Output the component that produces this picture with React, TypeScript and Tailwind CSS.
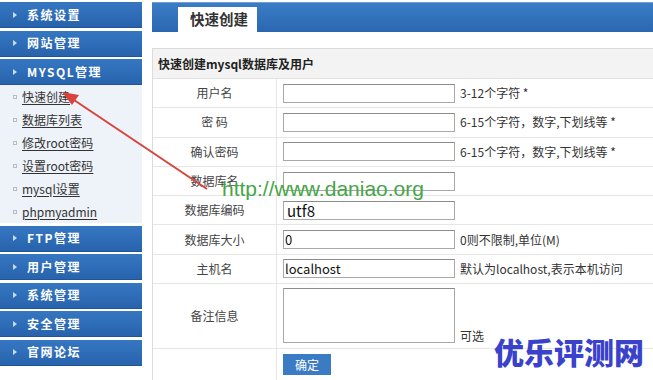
import React from "react";

const topMenus = ["系统设置", "网站管理", "MYSQL管理"];
const bottomMenus = ["FTP管理", "用户管理", "系统管理", "安全管理", "官网论坛"];
const subItems = ["快速创建", "数据库列表", "修改root密码", "设置root密码", "mysql设置", "phpmyadmin"];

function Bar({ label }: { label: string }) {
  return (
    <div className="h-[26px] bg-gradient-to-b from-[#3677c2] to-[#2863ad] flex items-center pl-[13px] border-b border-[#1f5596]">
      <span className="w-0 h-0 border-l-[4px] border-l-[#c4dbf2] border-y-[3.5px] border-y-transparent mr-[10px]" />
      <span className="text-white font-bold text-[12px] tracking-[1.5px] leading-none">{label}</span>
    </div>
  );
}

type Row = { label: string; value?: string; hint?: string; big?: boolean };

const rows: Row[] = [
  { label: "用户名", hint: "3-12个字符 *" },
  { label: "密 码", hint: "6-15个字符，数字,下划线等 *" },
  { label: "确认密码", hint: "6-15个字符，数字,下划线等 *" },
  { label: "数据库名" },
  { label: "数据库编码", value: "utf8", big: true },
  { label: "数据库大小", value: "0", hint: "0则不限制,单位(M)" },
  { label: "主机名", value: "localhost", hint: "默认为localhost,表示本机访问" },
];

export default function App() {
  return (
    <div className="relative w-[653px] h-[380px] overflow-hidden bg-white flex font-['Noto_Sans_CJK_SC','Noto_Sans',sans-serif] text-[#333]">
      {/* Sidebar */}
      <aside className="w-[142px] shrink-0 pt-[2px] flex flex-col gap-[2.5px]">
        {topMenus.map((m) => (
          <Bar key={m} label={m} />
        ))}
        <div className="bg-[#eef2f9] -mt-[2.5px] flex flex-col">
          {subItems.map((s) => (
            <div key={s} className="h-[23px] flex items-center pl-[13px]">
              <span className="w-[4px] h-[4px] border border-[#b5bcc8] mr-[5px]" />
              <span className="text-[12px] leading-none underline underline-offset-2 text-[#333]">{s}</span>
            </div>
          ))}
        </div>
        {bottomMenus.map((m) => (
          <Bar key={m} label={m} />
        ))}
      </aside>

      {/* Main */}
      <main className="ml-[10px] flex-1 flex flex-col">
        <div className="mt-[2px] h-[30px] bg-gradient-to-b from-[#3a7cc6] to-[#2b67b0] border-t border-[#6f9fd6] flex items-end pl-[26px]">
          <div className="w-[79px] h-[25px] bg-white flex items-center pl-[12px]">
            <span className="text-[14.5px] font-bold leading-none text-[#333]">快速创建</span>
          </div>
        </div>
        <div className="h-[16px]" />
        <div className="flex-1 border-l border-t border-[#dcdcdc] flex flex-col">
          <div className="h-[30px] bg-[#f3f3f3] border-b border-[#e2e2e2] flex items-center pl-[5px]">
            <span className="text-[12px] font-bold leading-none text-[#222]">快速创建mysql数据库及用户</span>
          </div>
          {rows.map((r) => (
            <div key={r.label} className="h-[29.3px] flex border-b border-[#e6e6e6]">
              <div className="w-[124px] border-r border-[#e6e6e6] flex items-center justify-center text-[12px] leading-none text-[#444]">
                {r.label}
              </div>
              <div className="flex items-center pl-[6px]">
                <div className={`w-[172px] h-[19px] border border-[#a8a8a8] border-t-[#8c8c8c] bg-white flex items-center leading-none text-[#111] ${r.big ? "text-[15px] pl-[3px]" : "text-[13px] pl-[1px]"}`}>
                  {r.value}
                </div>
                {r.hint && <span className="ml-[5px] text-[12px] leading-none text-[#333]">{r.hint}</span>}
              </div>
            </div>
          ))}
          <div className="h-[65px] flex border-b border-[#e6e6e6]">
            <div className="w-[124px] border-r border-[#e6e6e6] flex items-center justify-center text-[12px] leading-none text-[#444]">
              备注信息
            </div>
            <div className="flex items-end pl-[6px] pb-[5px]">
              <div className="w-[172px] h-[55px] border border-[#a8a8a8] border-t-[#8c8c8c] bg-white" />
              <span className="ml-[5px] mb-[1px] text-[12px] leading-none text-[#333]">可选</span>
            </div>
          </div>
          <div className="flex-1 flex">
            <div className="w-[124px] border-r border-[#e6e6e6]" />
            <div className="pl-[6px] pt-[5px]">
              <button className="w-[48px] h-[21px] bg-[#3b7bc4] text-white text-[12px] leading-none flex items-center justify-center">
                确定
              </button>
            </div>
          </div>
        </div>
      </main>

      {/* Overlays: watermark arrow and texts */}
      <svg className="absolute left-0 top-0 pointer-events-none" width="653" height="380" viewBox="0 0 653 380">
        <line x1="207" y1="189" x2="74" y2="100" stroke="#d8443c" strokeWidth="2" />
        <polygon points="62,92 79,95 72,105" fill="#d8443c" />
      </svg>
      <div className="absolute left-[222px] top-[178px] text-[21px] leading-none font-['Liberation_Sans',Arial,sans-serif] text-[#46a546] pointer-events-none">
        http://www.daniao.org
      </div>
      <div className="absolute left-[494px] top-[336px] text-[30px] leading-none font-black text-[#3a42cc] pointer-events-none">
        优乐评测网
      </div>
    </div>
  );
}
